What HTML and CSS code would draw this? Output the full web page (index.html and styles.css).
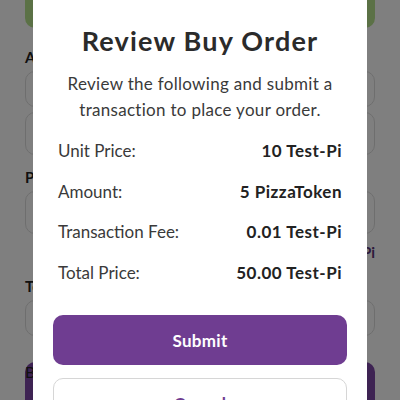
FILE: index.html
```html
<!DOCTYPE html>
<html lang="en">
<head>
    <meta charset="UTF-8">
    <meta name="viewport" content="width=device-width, initial-scale=1.0">
    <title>Review Buy Order</title>
    <link rel="stylesheet" href="styles.css">
</head>
<body>
    <div class="page">
        <div class="top-btn"></div>
        <label class="field-label">Amount</label>
        <div class="field field-short"></div>
        <div class="field field-tall"></div>
        <label class="field-label label-price">Price</label>
        <div class="field field-tall"></div>
        <div class="field-note">Test-Pi</div>
        <label class="field-label label-total">Total</label>
        <div class="field field-short"></div>
        <div class="page-btn">Buy</div>
    </div>

    <div class="overlay">
        <div class="modal">
            <h2 class="modal-title">Review Buy Order</h2>
            <p class="modal-text">Review the following and submit a transaction to place your order.</p>
            <div class="summary">
                <div class="summary-row">
                    <span>Unit Price:</span>
                    <strong>10 Test-Pi</strong>
                </div>
                <div class="summary-row">
                    <span>Amount:</span>
                    <strong>5 PizzaToken</strong>
                </div>
                <div class="summary-row">
                    <span>Transaction Fee:</span>
                    <strong>0.01 Test-Pi</strong>
                </div>
                <div class="summary-row">
                    <span>Total Price:</span>
                    <strong>50.00 Test-Pi</strong>
                </div>
            </div>
            <button type="button" class="btn btn-submit">Submit</button>
            <button type="button" class="btn btn-cancel">Cancel</button>
        </div>
    </div>
</body>
</html>
```

FILE: styles.css
```css
body {
    margin: 0;
    height: 400px;
    overflow: hidden;
    font-family: 'Lato', sans-serif;
    background-color: #fff;
    color: #222;
}

.page {
    padding: 0 25px;
}

.top-btn {
    height: 28px;
    background-color: #b6e38c;
    border-radius: 0 0 10px 10px;
}

.field-label {
    display: block;
    margin-top: 20px;
    font-size: 15px;
    font-weight: 700;
    line-height: 18px;
}

.label-price {
    margin-top: 13px;
}

.label-total {
    margin-top: 15px;
}

.field {
    margin-top: 5px;
    border: 1px solid #ddd;
    border-radius: 10px;
    box-sizing: border-box;
}

.field-short {
    height: 36px;
}

.field-tall {
    height: 43px;
}

.field-note {
    margin-top: 8px;
    text-align: right;
    font-size: 15px;
    font-weight: 700;
    color: #5a3478;
    line-height: 20px;
}

.page-btn {
    margin-top: 26px;
    height: 50px;
    border-radius: 10px;
    background-color: #7c46a6;
}

.overlay {
    position: fixed;
    inset: 0;
    background-color: rgba(0, 0, 0, 0.5);
}

.modal {
    position: absolute;
    top: -20px;
    left: 33px;
    width: 334px;
    height: 460px;
    box-sizing: border-box;
    padding: 45px 20px 0;
    background-color: #fff;
    border-radius: 10px;
    color: #2b2b2b;
}

.modal-title {
    margin: 0;
    text-align: center;
    font-size: 27px;
    font-weight: 700;
    letter-spacing: 1.2px;
    line-height: 31px;
}

.modal-text {
    margin: 15px 0 0;
    text-align: center;
    font-size: 17px;
    letter-spacing: 0.3px;
    line-height: 25.5px;
    color: #3a3a3a;
}

.summary {
    margin: 9px 5px 0;
}

.summary-row {
    display: flex;
    justify-content: space-between;
    font-size: 17px;
    line-height: 40.5px;
    color: #3a3a3a;
}

.summary-row strong {
    color: #222;
    letter-spacing: 0.5px;
}

.btn {
    display: block;
    width: 100%;
    height: 50px;
    border-radius: 10px;
    font-family: 'Lato', sans-serif;
    font-size: 17px;
    font-weight: 700;
    letter-spacing: 0.3px;
    cursor: pointer;
}

.btn-submit {
    margin-top: 22px;
    border: none;
    background-color: #6f3d91;
    color: #fff;
}

.btn-cancel {
    margin-top: 13px;
    border: 1px solid #d6d6d6;
    background-color: #fff;
    color: #6f3d91;
}
```
